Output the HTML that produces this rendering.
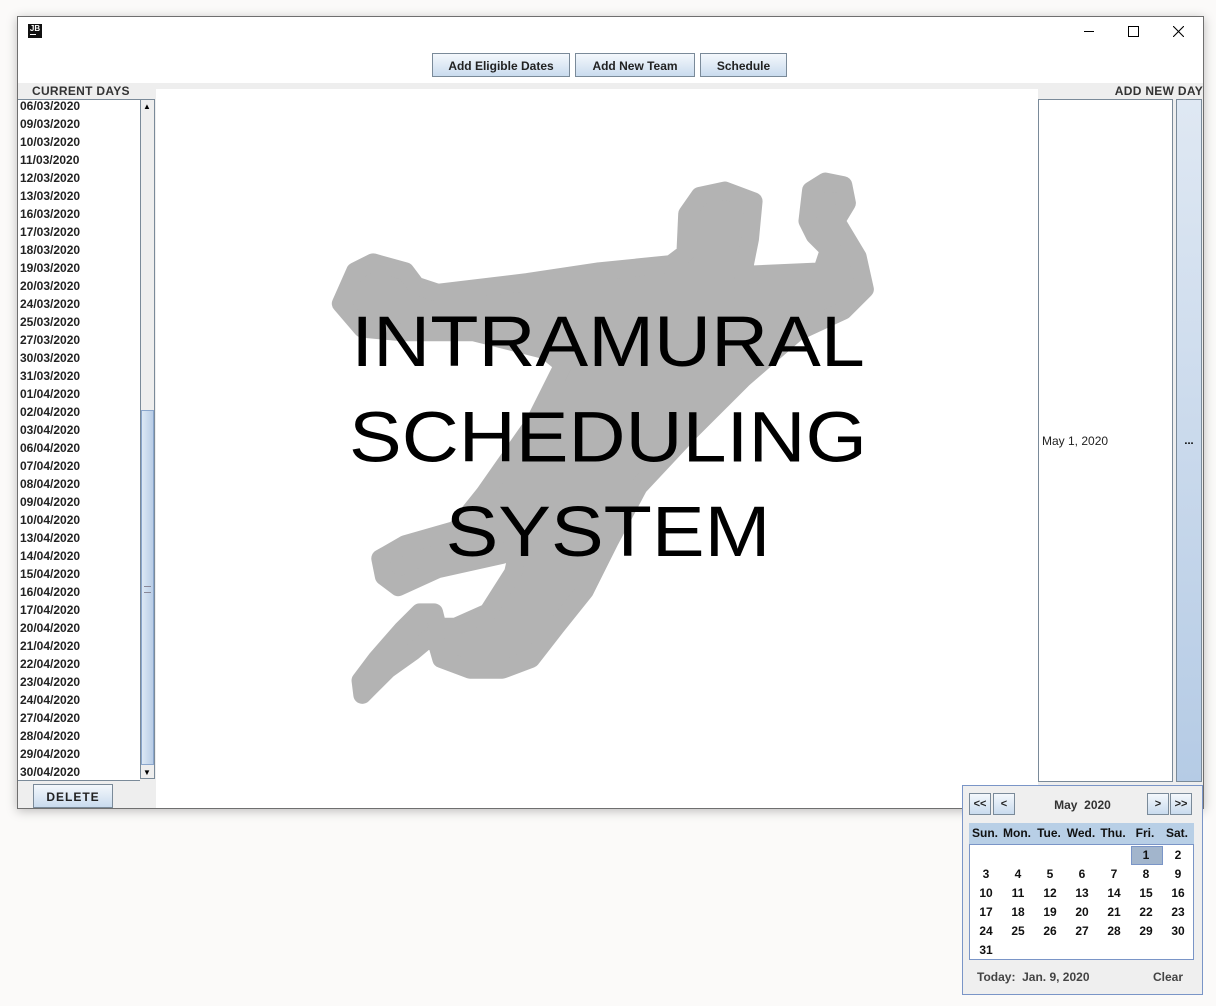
<!DOCTYPE html>
<html><head><style>
body{margin:0;width:1216px;height:1006px;background:#fbfaf9;position:relative;overflow:hidden;font-family:"Liberation Sans",Arial,sans-serif}
.abs{position:absolute}
.win{left:17px;top:16px;width:1185px;height:791px;background:#fff;border:1px solid #6f6f6f;box-shadow:0 2px 10px rgba(0,0,0,.25)}
.btn{position:absolute;height:24px;border:1px solid #7a8a99;background:linear-gradient(#f4f8fc,#c9dbee);font:bold 12px "Liberation Sans",Arial,sans-serif;color:#222;text-align:center;line-height:24px;box-sizing:border-box}
.list div{height:18px;line-height:18px;font:bold 12px "Liberation Sans",Arial,sans-serif;color:#222;padding-left:2px}
.cal{left:962px;top:785px;width:239px;height:208px;background:#efefef;border:1px solid #7a95c7}
.cb{position:absolute;top:7px;height:22px;width:22px;border:1px solid #7a8a99;box-sizing:border-box;background:linear-gradient(#f4f8fc,#c9dbee);font:bold 11px "Liberation Sans",Arial,sans-serif;text-align:center;line-height:20px;color:#222}
.grid span{position:absolute;width:32px;text-align:center;font:bold 12px "Liberation Sans",Arial,sans-serif;color:#111}
</style></head><body>
<div class="abs win">
 <div class="abs" style="left:10px;top:7px;width:14px;height:14px;background:#111;color:#fff;font:bold 8px 'Liberation Sans',sans-serif;line-height:9px;text-align:center">JB<div style="width:6px;height:1px;background:#fff;margin:1px 2px"></div></div>
 <div class="abs" style="left:1066px;top:14px;width:10px;height:1px;background:#000"></div>
 <div class="abs" style="left:1110px;top:9px;width:9px;height:9px;border:1px solid #000"></div>
 <svg class="abs" style="left:1155px;top:9px" width="11" height="11"><path d="M0 0L11 11M11 0L0 11" stroke="#000" stroke-width="1.1"/></svg>
 <div class="btn" style="left:414px;top:36px;width:138px">Add Eligible Dates</div>
 <div class="btn" style="left:557px;top:36px;width:120px">Add New Team</div>
 <div class="btn" style="left:682px;top:36px;width:87px">Schedule</div>
 <div class="abs" style="left:0;top:66px;width:1185px;height:725px;background:#eeeeee"></div>
 <div class="abs" style="left:14px;top:67px;font:bold 12px 'Liberation Sans',sans-serif;letter-spacing:0.3px;color:#333">CURRENT DAYS</div>
 <div class="abs" style="right:0;top:67px;font:bold 12px 'Liberation Sans',sans-serif;letter-spacing:0.3px;color:#333">ADD NEW DAY</div>
 <div class="abs list" style="left:0;top:82px;width:122px;height:680px;background:#fff;border-top:1px solid #7a8a99;border-bottom:1px solid #7a8a99;overflow:hidden">
  <div style="margin-top:-1px">06/03/2020</div><div>09/03/2020</div><div>10/03/2020</div><div>11/03/2020</div><div>12/03/2020</div><div>13/03/2020</div><div>16/03/2020</div><div>17/03/2020</div><div>18/03/2020</div><div>19/03/2020</div><div>20/03/2020</div><div>24/03/2020</div><div>25/03/2020</div><div>27/03/2020</div><div>30/03/2020</div><div>31/03/2020</div><div>01/04/2020</div><div>02/04/2020</div><div>03/04/2020</div><div>06/04/2020</div><div>07/04/2020</div><div>08/04/2020</div><div>09/04/2020</div><div>10/04/2020</div><div>13/04/2020</div><div>14/04/2020</div><div>15/04/2020</div><div>16/04/2020</div><div>17/04/2020</div><div>20/04/2020</div><div>21/04/2020</div><div>22/04/2020</div><div>23/04/2020</div><div>24/04/2020</div><div>27/04/2020</div><div>28/04/2020</div><div>29/04/2020</div><div>30/04/2020</div>
 </div>
 <div class="abs" style="left:122px;top:82px;width:15px;height:680px;background:#eee;border:1px solid #7a8a99;box-sizing:border-box"></div>
 <div class="abs" style="left:123px;top:393px;width:13px;height:355px;border:1px solid #8aa6cc;box-sizing:border-box;background:linear-gradient(90deg,#dce8f5,#b8cde6)"></div>
 <div class="abs" style="left:126px;top:569px;width:7px;height:5px;border-top:1px solid #889;border-bottom:1px solid #889"></div>
 <div class="abs" style="left:125px;top:85px;font-size:8px">▲</div>
 <div class="abs" style="left:125px;top:751px;font-size:8px">▼</div>
 <div class="btn" style="left:15px;top:767px;width:80px;letter-spacing:1px">DELETE</div>
 <div class="abs" style="left:138px;top:72px;width:882px;height:719px;background:#fff"></div>
 <div class="abs" style="left:1020px;top:82px;width:135px;height:683px;background:#fff;border:1px solid #7a8a99;box-sizing:border-box;font:12px 'Liberation Sans',sans-serif;color:#222"><span style="position:absolute;left:3px;top:334px">May 1, 2020</span></div>
 <div class="abs" style="left:1158px;top:82px;width:26px;height:683px;border:1px solid #7a8a99;box-sizing:border-box;background:linear-gradient(#dfe8f3,#b5cbe5);font:bold 11px sans-serif;text-align:center;line-height:683px">...</div>
</div>
<svg class="abs" style="left:330px;top:160px" width="560" height="560" viewBox="0 0 1560 1560"><path fill="#b3b3b3" stroke="#b3b3b3" stroke-width="50" stroke-linejoin="round" d="M30 400 L70 310 L120 285 L210 310 L240 350 L300 370 L550 340 L750 310 L950 290 L990 260 L995 150 L1030 100 L1100 85 L1180 115 L1170 220 L1150 320 L1370 310 L1390 250 L1350 210 L1330 170 L1340 85 L1380 60 L1430 70 L1440 120 L1410 170 L1470 270 L1490 360 L1430 420 L1300 480 L1150 610 L1000 760 L860 910 L780 1060 L710 1200 L630 1300 L560 1390 L480 1420 L390 1420 L310 1390 L290 1320 L230 1370 L160 1420 L110 1470 L90 1490 L85 1450 L130 1390 L200 1310 L250 1260 L290 1260 L300 1300 L350 1300 L440 1260 L510 1150 L530 1060 L480 1100 L300 1140 L190 1190 L150 1160 L140 1110 L210 1070 L350 1030 L430 930 L570 730 L650 570 L600 530 L400 480 L200 480 L90 470 Z"/></svg>
<div class="abs" style="left:300px;top:294px;width:616px;text-align:center;font:79px/105.5px 'Liberation Sans',Arial,sans-serif;color:#000;transform:scaleY(0.9);transform-origin:top">INTRAMURAL<br>SCHEDULING<br>SYSTEM</div>
<div class="abs cal">
 <div class="cb" style="left:6px">&lt;&lt;</div><div class="cb" style="left:30px">&lt;</div>
 <div class="abs" style="left:0;width:239px;top:12px;text-align:center;font:bold 12px 'Liberation Sans',sans-serif;color:#333">May&nbsp; 2020</div>
 <div class="cb" style="left:184px">&gt;</div><div class="cb" style="left:207px">&gt;&gt;</div>
 <div class="abs" style="left:6px;top:37px;width:225px;height:21px;background:#b8cfe6;font:bold 12px 'Liberation Sans',sans-serif;line-height:21px;color:#111">
  <span class="abs" style="left:0;width:32px;text-align:center">Sun.</span><span class="abs" style="left:32px;width:32px;text-align:center">Mon.</span><span class="abs" style="left:64px;width:32px;text-align:center">Tue.</span><span class="abs" style="left:96px;width:32px;text-align:center">Wed.</span><span class="abs" style="left:128px;width:32px;text-align:center">Thu.</span><span class="abs" style="left:160px;width:32px;text-align:center">Fri.</span><span class="abs" style="left:192px;width:32px;text-align:center">Sat.</span>
 </div>
 <div class="abs grid" style="left:6px;top:58px;width:223px;height:114px;background:#fff;border:1px solid #7a95c7">
  <div class="abs" style="left:161px;top:1px;width:30px;height:17px;background:#a2b5cc;border:1px solid #7a95c7"></div>
  <span style="left:160px;top:3px">1</span><span style="left:192px;top:3px">2</span>
  <span style="left:0;top:22px">3</span><span style="left:32px;top:22px">4</span><span style="left:64px;top:22px">5</span><span style="left:96px;top:22px">6</span><span style="left:128px;top:22px">7</span><span style="left:160px;top:22px">8</span><span style="left:192px;top:22px">9</span>
  <span style="left:0;top:41px">10</span><span style="left:32px;top:41px">11</span><span style="left:64px;top:41px">12</span><span style="left:96px;top:41px">13</span><span style="left:128px;top:41px">14</span><span style="left:160px;top:41px">15</span><span style="left:192px;top:41px">16</span>
  <span style="left:0;top:60px">17</span><span style="left:32px;top:60px">18</span><span style="left:64px;top:60px">19</span><span style="left:96px;top:60px">20</span><span style="left:128px;top:60px">21</span><span style="left:160px;top:60px">22</span><span style="left:192px;top:60px">23</span>
  <span style="left:0;top:79px">24</span><span style="left:32px;top:79px">25</span><span style="left:64px;top:79px">26</span><span style="left:96px;top:79px">27</span><span style="left:128px;top:79px">28</span><span style="left:160px;top:79px">29</span><span style="left:192px;top:79px">30</span>
  <span style="left:0;top:98px">31</span>
 </div>
 <div class="abs" style="left:14px;top:184px;font:bold 12px 'Liberation Sans',sans-serif;color:#444">Today:&nbsp; Jan. 9, 2020</div>
 <div class="abs" style="left:190px;top:184px;font:bold 12px 'Liberation Sans',sans-serif;color:#444">Clear</div>
</div>
</body></html>
